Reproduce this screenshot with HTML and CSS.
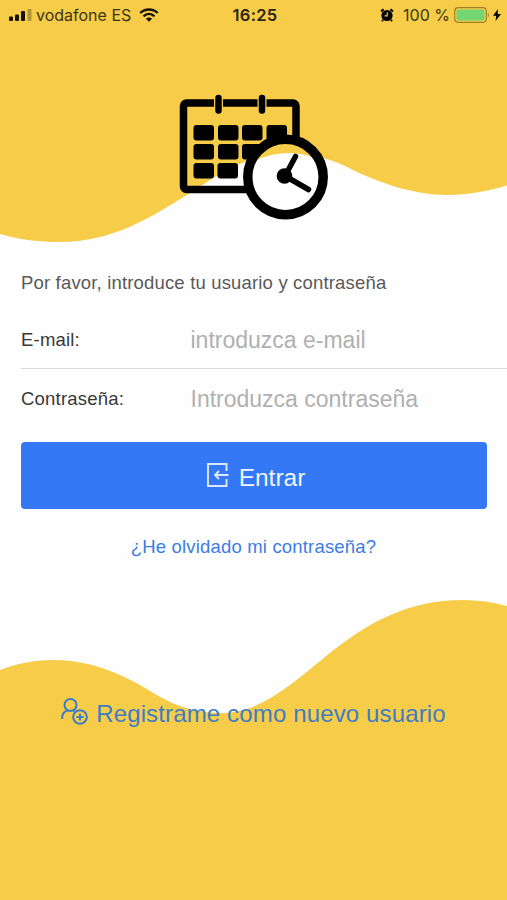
FILE: index.html
```html
<!DOCTYPE html>
<html lang="es">
<head>
  <meta charset="UTF-8" />
  <meta name="viewport" content="width=device-width, initial-scale=1" />
  <title>Entrar</title>
  <link rel="stylesheet" href="styles.css">
</head>
<body>
  <div class="screen">
    <svg class="waves" viewBox="0 0 507 900" aria-hidden="true">
      <path d="M0 0H507V185.500C488 191 468 195 448 195C415 195 383 184 355 171C334 160 314 153 287 153C250 153 220 174 190 193C150 218 112 242 60 242C40 242 20 240 0 234Z" />
      <path d="M0 900V670C18 663 36 660 54 660C92 660 125 675 155 694C178 708 200 713 223 713C260 713 293 683 325 657C368 622 408 600 463 600C478 600 493 602 507 606V900Z" />
    </svg>

    <header class="status-bar">
      <div class="status-left">
        <svg class="signal" width="23" height="12" viewBox="0 0 23 12">
          <rect x="0" y="7.500" width="4" height="4.500" rx="1" />
          <rect x="6" y="5.500" width="4" height="6.500" rx="1" />
          <rect x="12" y="2" width="4" height="10" rx="1" />
          <rect x="18.500" y="0" width="4" height="12" rx="1" opacity="0.3" />
        </svg>
        <span class="carrier">vodafone ES</span>
        <svg class="wifi" width="20" height="14" viewBox="0 0 20 14">
          <path d="M1.200 5C6.200 .3 13.800 .3 18.800 5" />
          <path d="M4.500 8.300C7.800 5.300 12.200 5.300 15.500 8.300" />
          <path class="dot" d="M6.900 10.700Q10 8.300 13.100 10.700L10 13.800Z" />
        </svg>
      </div>
      <span class="clock">16:25</span>
      <div class="status-right">
        <svg class="alarm" width="14" height="14" viewBox="0 0 14 14">
          <circle cx="7" cy="7.500" r="5.600" />
          <path class="bells" d="M1 3.500L3.600 1.300M13 3.500L10.400 1.300M3 12L2 13.200M11 12L12 13.200" />
          <path class="hands" d="M7.200 4.300V7.800H4.600" />
        </svg>
        <span class="percent">100 %</span>
        <svg class="battery" width="36" height="16" viewBox="0 0 36 16">
          <rect class="case" x=".7" y=".7" width="31.600" height="14.600" rx="3.500" />
          <rect class="level" x="2.500" y="2.500" width="28" height="11" rx="2" />
          <path class="tip" d="M33.800 5.500Q36 8 33.800 10.500Z" />
        </svg>
        <svg class="bolt" width="8" height="12" viewBox="0 0 8 12">
          <path d="M5 0L0 6.800H3.300L2.500 12L8 5H4.600Z" />
        </svg>
      </div>
    </header>

    <main class="login">
      <svg class="logo" width="150" height="126" viewBox="179 94 150 126">
        <rect class="frame" x="183.500" y="103" width="112.500" height="86.500" rx="3" />
        <g class="days">
          <rect x="193.500" y="125" width="20.500" height="15.500" rx="3" />
          <rect x="218" y="125" width="20.500" height="15.500" rx="3" />
          <rect x="242" y="125" width="20.500" height="15.500" rx="3" />
          <rect x="266.500" y="125" width="20.500" height="15.500" rx="3" />
          <rect x="193.500" y="144" width="20.500" height="15.500" rx="3" />
          <rect x="218" y="144" width="20.500" height="15.500" rx="3" />
          <rect x="242" y="144" width="20.500" height="15.500" rx="3" />
          <rect x="193.500" y="163" width="20.500" height="15.500" rx="3" />
          <rect x="217.500" y="163" width="20.500" height="15.500" rx="3" />
        </g>
        <path class="ring-gap" d="M218.500 98.500V110M262 98.500V110" />
        <path class="ring" d="M218.500 98V110.500M262 98V110.500" />
        <circle class="face" cx="285.500" cy="177" r="37.500" />
        <path class="sky" d="M256 160C271 135 300 135 315 158Q286 147 256 160Z" />
        <circle class="dial" cx="285.500" cy="177" r="37.700" />
        <circle cx="284.500" cy="176" r="7.800" />
        <path class="hand" d="M285 176L295.500 156.500M285 176L308.500 189.500" />
      </svg>

      <p class="intro">Por favor, introduce tu usuario y contraseña</p>

      <form class="form">
        <div class="field">
          <label for="email">E-mail:</label>
          <input id="email" type="email" placeholder="introduzca e-mail">
        </div>
        <div class="field">
          <label for="password">Contraseña:</label>
          <input id="password" type="password" placeholder="Introduzca contraseña">
        </div>
        <button type="button" class="submit">
          <svg width="22" height="24" viewBox="0 0 22 24">
            <path d="M19.500 8V1H1V23H19.500V16M21.500 12H8M12 8L8 12L12 16" />
          </svg>
          <span>Entrar</span>
        </button>
      </form>

      <a class="forgot" href="#">¿He olvidado mi contraseña?</a>

      <a class="register" href="#">
        <svg width="27" height="27" viewBox="0 0 27 27">
          <circle cx="9.500" cy="7" r="6" />
          <path d="M1 21C1 17 3.200 13.500 6.800 12.300M12.200 12.300L13.800 13" />
          <circle cx="19" cy="19" r="6.800" />
          <path d="M19 15.500V22.500M15.500 19H22.500" />
        </svg>
        <span>Registrame como nuevo usuario</span>
      </a>
    </main>
  </div>
</body>
</html>
```

FILE: styles.css
```css
* {
  box-sizing: border-box;
}

body {
  margin: 0;
  font-family: "Liberation Sans", Arial, Helvetica, sans-serif;
  background: #fefefe;
}

.screen {
  position: relative;
  width: 507px;
  height: 900px;
  overflow: hidden;
}

/* background */
.waves {
  position: absolute;
  top: 0;
  left: 0;
  width: 507px;
  height: 900px;
  fill: #f6cc48;
  z-index: -1;
}

/* status bar */
.status-bar {
  display: grid;
  grid-template-columns: 1fr auto 1fr;
  align-items: center;
  height: 30px;
  padding: 0 6px 0 9px;
  font-family: Inter, "Liberation Sans", sans-serif;
  font-size: 16px;
  color: #3d3417;
}

.status-left,
.status-right {
  display: flex;
  align-items: center;
}

.status-right {
  justify-content: flex-end;
}

.signal {
  margin-right: 4px;
  fill: #17130a;
}

.wifi {
  margin-left: 8px;
  fill: none;
  stroke: #17130a;
  stroke-width: 2.4;
}

.wifi .dot {
  fill: #17130a;
  stroke: none;
}

.clock {
  font-size: 16.5px;
  font-weight: 600;
  letter-spacing: 0.3px;
  color: #2a230f;
}

.alarm {
  margin-right: 9px;
}

.alarm .bells {
  stroke: #000;
  stroke-width: 2;
}

.alarm .hands {
  fill: none;
  stroke: #f6cc48;
  stroke-width: 1.2;
}

.battery {
  margin: 0 3px 0 4px;
}

.battery .case {
  fill: none;
  stroke: #a08125;
  stroke-width: 1.2;
}

.battery .level {
  fill: #74d572;
}

.battery .tip {
  fill: #a08125;
}

/* login */
.login {
  display: flex;
  flex-direction: column;
  align-items: center;
}

.logo {
  margin-top: 64px;
}

.logo .frame {
  fill: none;
  stroke: #000;
  stroke-width: 7.5;
}

.logo .ring-gap {
  stroke: #f6cc48;
  stroke-width: 9;
}

.logo .ring {
  stroke: #000;
  stroke-width: 6.5;
  stroke-linecap: round;
}

.logo .face {
  fill: #fefefe;
}

.logo .sky {
  fill: #f6cc48;
}

.logo .dial {
  fill: none;
  stroke: #000;
  stroke-width: 9.5;
}

.logo .hand {
  stroke: #000;
  stroke-width: 5.5;
  stroke-linecap: round;
}

.intro {
  align-self: stretch;
  margin: 52px 0 0 21px;
  font-size: 18.5px;
  letter-spacing: 0.17px;
  line-height: 22px;
  color: #595959;
}

.form {
  align-self: stretch;
  margin-top: 17px;
  padding-left: 21px;
}

.field {
  display: flex;
  align-items: center;
  height: 59px;
}

.field:first-child {
  height: 58px;
  border-bottom: 1px solid #dadada;
}

.field label {
  width: 169.5px;
  font-size: 18.5px;
  letter-spacing: 0.2px;
  color: #383838;
}

.field input {
  flex: 1;
  min-width: 0;
  padding: 2px 0 0;
  border: none;
  outline: none;
  background: none;
  font: inherit;
  font-size: 23px;
}

.field input::placeholder {
  color: #b0b0b0;
}

.submit {
  display: flex;
  justify-content: center;
  align-items: center;
  gap: 10px;
  width: 466px;
  height: 67px;
  margin-top: 14px;
  padding: 0 0 0 4px;
  border: none;
  border-radius: 4px;
  background: #3478f6;
  color: #f0f5ff;
  font-family: inherit;
  font-size: 24.5px;
}

.submit svg {
  margin-top: -1px;
  fill: none;
  stroke: #dce8ff;
  stroke-width: 1.9;
}

.submit span {
  padding-top: 4px;
}

.forgot {
  margin-top: 27px;
  font-size: 18.5px;
  letter-spacing: 0.18px;
  line-height: 22px;
  color: #3b7de4;
  text-decoration: none;
}

.register {
  display: flex;
  align-items: center;
  gap: 8px;
  margin-top: 141px;
  font-size: 24px;
  letter-spacing: 0.14px;
  line-height: 30px;
  color: #3d7dc4;
  text-decoration: none;
}

.register svg {
  margin-top: -6px;
  fill: none;
  stroke: #3d7dc4;
  stroke-width: 2;
}
```
